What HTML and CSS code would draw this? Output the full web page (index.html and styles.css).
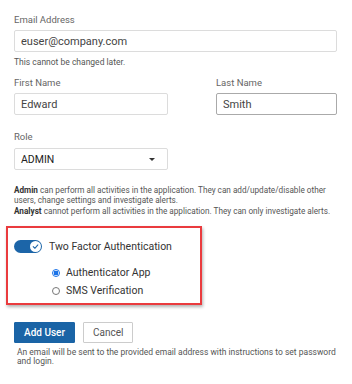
FILE: index.html
```html
<!DOCTYPE html>
<html lang="en">
<head>
    <meta charset="UTF-8">
    <meta name="viewport" content="width=device-width, initial-scale=1.0">
    <title>Add User</title>
    <link rel="stylesheet" href="styles.css">
</head>
<body>
    <div class="field">
        <label for="email">Email Address</label>
        <input type="text" id="email" class="input wide" value="euser@company.com">
        <div class="hint">This cannot be changed later.</div>
    </div>
    <div class="row">
        <div class="field first">
            <label for="firstName">First Name</label>
            <input type="text" id="firstName" class="input" value="Edward">
        </div>
        <div class="field last">
            <label for="lastName">Last Name</label>
            <input type="text" id="lastName" class="input dark" value="Smith">
        </div>
    </div>
    <div class="field role">
        <label for="role">Role</label>
        <div class="select" id="role">
            <span>ADMIN</span>
            <span class="caret"></span>
        </div>
    </div>
    <div class="roles-info">
        <p><b>Admin</b> can perform all activities in the application. They can add/update/disable other users, change settings and investigate alerts.</p>
        <p><b>Analyst</b> cannot perform all activities in the application. They can only investigate alerts.</p>
    </div>
    <div class="twofa">
        <div class="toggle-row">
            <span class="toggle">
                <span class="knob">
                    <svg width="9" height="9" viewBox="0 0 10 10"><path d="M2.5 5.2 L4.3 7 L7.6 3.3" fill="none" stroke="#1c65a8" stroke-width="1.2" stroke-linecap="round" stroke-linejoin="round"/></svg>
                </span>
            </span>
            <span class="toggle-label">Two Factor Authentication</span>
        </div>
        <div class="radios">
            <label class="radio"><span class="dot checked"></span>Authenticator App</label>
            <label class="radio"><span class="dot"></span>SMS Verification</label>
        </div>
    </div>
    <div class="buttons">
        <button class="btn primary">Add User</button>
        <button class="btn">Cancel</button>
    </div>
    <div class="footnote">An email will be sent to the provided email address with instructions to set password and login.</div>
</body>
</html>
```

FILE: styles.css
```css
body {
    margin: 0;
    padding: 14px 12px 0 14px;
    font-family: Roboto, 'Noto Sans', sans-serif;
    background-color: #ffffff;
    color: #333;
}
.field label {
    display: block;
    font-size: 9.5px;
    line-height: 12px;
    color: #666;
    margin-bottom: 4px;
}
.input {
    display: block;
    box-sizing: border-box;
    width: 100%;
    height: 22px;
    padding: 0 6px;
    border: 1px solid #dcdcdc;
    border-radius: 2px;
    font-family: inherit;
    font-size: 11px;
    color: #444;
    outline: none;
}
.wide {
    width: 323px;
}
.input.dark {
    border-color: #aaa;
}
.hint {
    font-size: 8.5px;
    line-height: 12px;
    color: #555;
    margin-top: 4px;
}
.row {
    display: flex;
    gap: 48px;
    margin-top: 9px;
}
.first {
    width: 154px;
}
.last {
    width: 121px;
}
.role {
    margin-top: 16px;
    width: 154px;
}
.role label {
    margin-bottom: 5px;
}
.select {
    box-sizing: border-box;
    height: 22px;
    padding: 0 6px;
    border: 1px solid #dcdcdc;
    border-radius: 2px;
    display: flex;
    align-items: center;
    justify-content: space-between;
    font-size: 10.5px;
    color: #222;
}
.caret {
    width: 0;
    height: 0;
    border-left: 3px solid transparent;
    border-right: 3px solid transparent;
    border-top: 3px solid #333;
    margin-right: 6px;
}
.roles-info {
    margin-top: 15px;
    font-size: 8.2px;
    line-height: 10px;
    color: #555;
}
.roles-info p {
    margin: 0 0 1px 0;
}
.roles-info b {
    color: #333;
}
.twofa {
    margin: 10px 0 0 -8px;
    width: 196px;
    height: 79px;
    box-sizing: border-box;
    border: 2px solid #ea3b3e;
    box-shadow: 1px 2px 3px rgba(0, 0, 0, 0.3);
    padding: 12px 0 0 6px;
}
.toggle-row {
    display: flex;
    align-items: center;
    gap: 7px;
}
.toggle {
    width: 28px;
    height: 13px;
    border-radius: 7px;
    background-color: #1c65a8;
    position: relative;
}
.knob {
    position: absolute;
    right: 1px;
    top: 1px;
    width: 11px;
    height: 11px;
    border-radius: 50%;
    background-color: #fff;
    display: flex;
    align-items: center;
    justify-content: center;
}
.toggle-label {
    font-size: 10.5px;
    color: #333;
}
.radios {
    margin: 13px 0 0 38px;
    display: flex;
    flex-direction: column;
    gap: 5px;
}
.radio {
    display: flex;
    align-items: center;
    gap: 6px;
    font-size: 10.5px;
    line-height: 13px;
    color: #333;
}
.dot {
    box-sizing: border-box;
    width: 8px;
    height: 8px;
    border-radius: 50%;
    border: 1px solid #777;
    background: #fff;
}
.dot.checked {
    border-color: #1a73e8;
    background: radial-gradient(circle, #1a73e8 0 2.2px, #fff 2.6px);
}
.buttons {
    display: flex;
    gap: 8px;
    margin-top: 17px;
}
.btn {
    height: 21px;
    padding: 0 9px;
    border: 1px solid #ccc;
    background: #fff;
    color: #555;
    font-family: inherit;
    font-size: 10px;
    border-radius: 1px;
}
.btn.primary {
    background-color: #1a64a6;
    border-color: #1a64a6;
    color: #fff;
    font-weight: 500;
}
.footnote {
    margin: 5px 0 0 3px;
    font-size: 8.5px;
    line-height: 9px;
    color: #555;
}
```
